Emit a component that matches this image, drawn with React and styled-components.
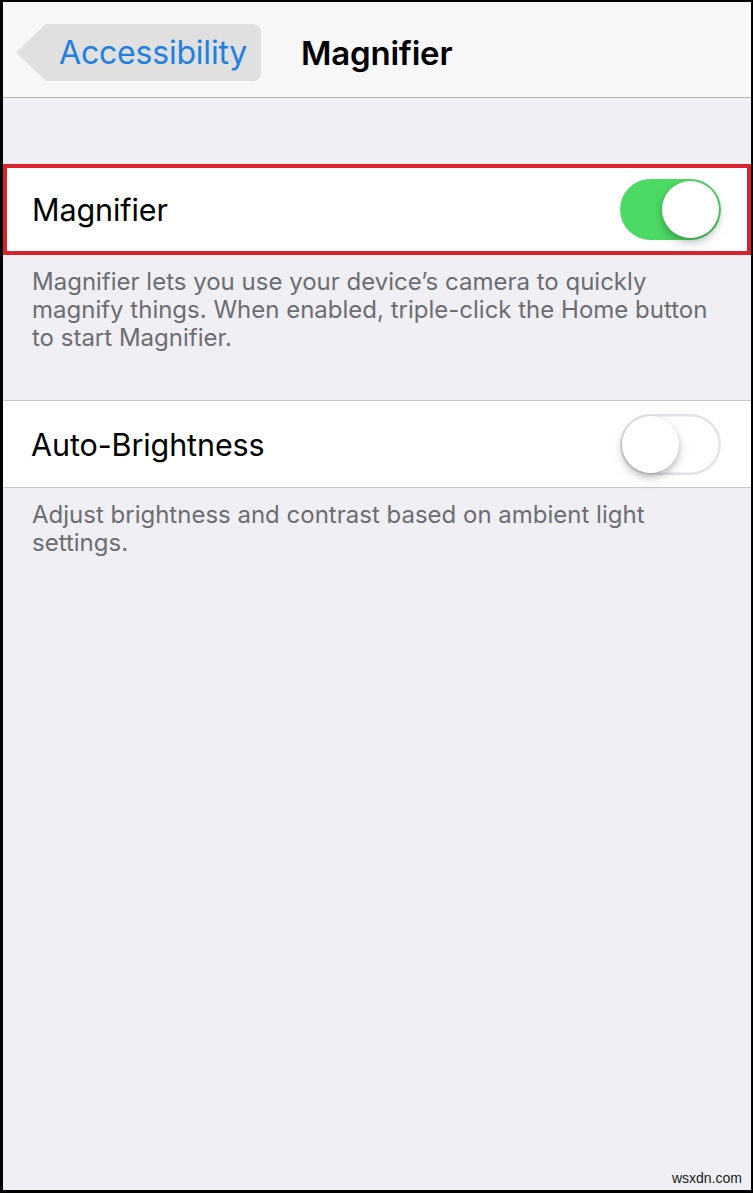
import React from "react";
import styled, { createGlobalStyle } from "styled-components";

const Global = createGlobalStyle`
  html, body {
    margin: 0;
    padding: 0;
    background: #000;
  }
  * { box-sizing: border-box; }
`;

const Frame = styled.div`
  width: 753px;
  height: 1193px;
  border: 2px solid #000;
  border-left-width: 3px;
  border-bottom-width: 3px;
  background: #efeff4;
  font-family: Inter, "Noto Sans", sans-serif;
  display: flex;
  flex-direction: column;
  position: relative;
  overflow: hidden;
`;

const NavBar = styled.header`
  height: 96px;
  flex: none;
  background: #f7f7f7;
  border-bottom: 1px solid #b4b4b4;
  display: flex;
  align-items: center;
  padding-left: 13px;
  padding-top: 6px;
`;

const BackButton = styled.button`
  appearance: none;
  border: 0;
  margin: 0;
  width: 245px;
  height: 57px;
  padding: 0 0 0 43px;
  background: #e0e0e0;
  border-radius: 8px;
  clip-path: polygon(30px 0, 100% 0, 100% 100%, 30px 100%, 0 50%);
  color: #1f80e0;
  font-family: inherit;
  font-size: 32px;
  font-weight: 400;
  text-align: left;
  letter-spacing: -0.2px;
`;

const Title = styled.h1`
  margin: 0 0 0 40px;
  font-size: 33px;
  font-weight: 600;
  color: #000;
  letter-spacing: -0.2px;
`;

const Gap = styled.div`
  height: ${(p) => p.$h}px;
  flex: none;
`;

const Row = styled.div`
  flex: none;
  height: ${(p) => (p.$highlight ? 91 : 88)}px;
  background: #fff;
  display: flex;
  align-items: center;
  justify-content: space-between;
  padding: 0 ${(p) => (p.$highlight ? 26 : 30)}px 0
    ${(p) => (p.$highlight ? 25 : 28)}px;
  border: ${(p) => (p.$highlight ? "4px solid #d8232e" : "0")};
  ${(p) =>
    !p.$highlight &&
    `border-top: 1px solid #c8c7cc; border-bottom: 1px solid #c8c7cc;`}
`;

const Label = styled.span`
  font-size: 30.5px;
  color: #000;
  letter-spacing: -0.1px;
`;

const Switch = styled.div`
  position: relative;
  width: 101px;
  height: 61px;
  border-radius: 31px;
  flex: none;
  background: ${(p) => (p.$on ? "#4cd964" : "#fff")};
  box-shadow: ${(p) => (p.$on ? "none" : "inset 0 0 0 2.5px #e4e4e8")};
`;

const Knob = styled.span`
  position: absolute;
  top: 2px;
  left: ${(p) => (p.$on ? "42px" : "2px")};
  width: 57px;
  height: 57px;
  border-radius: 50%;
  background: #fff;
  box-shadow: 0 0 0 0.5px rgba(0, 0, 0, 0.06), 0 4px 6px rgba(0, 0, 0, 0.18),
    0 6px 14px rgba(0, 0, 0, 0.1);
`;

const Footer = styled.p`
  margin: 0;
  padding: 13px 28px 0 29px;
  font-size: 24px;
  line-height: 28px;
  color: #6d6d72;
  letter-spacing: 0;
`;

const Watermark = styled.span`
  position: absolute;
  right: 9px;
  bottom: 4px;
  font-family: "Liberation Sans", Arial, sans-serif;
  font-size: 14px;
  color: #1a1a1a;
`;

function Toggle({ on }) {
  return (
    <Switch $on={on} role="switch" aria-checked={on}>
      <Knob $on={on} />
    </Switch>
  );
}

export default function App() {
  return (
    <>
      <Global />
      <Frame>
        <NavBar>
          <BackButton>Accessibility</BackButton>
          <Title>Magnifier</Title>
        </NavBar>
        <Gap $h={66} />
        <Row $highlight>
          <Label>Magnifier</Label>
          <Toggle on />
        </Row>
        <Footer>
          Magnifier lets you use your device’s camera to quickly magnify things.
          When enabled, triple-click the Home button to start Magnifier.
        </Footer>
        <Gap $h={48} />
        <Row>
          <Label>Auto-Brightness</Label>
          <Toggle on={false} />
        </Row>
        <Footer>
          Adjust brightness and contrast based on ambient light settings.
        </Footer>
        <Watermark>wsxdn.com</Watermark>
      </Frame>
    </>
  );
}
